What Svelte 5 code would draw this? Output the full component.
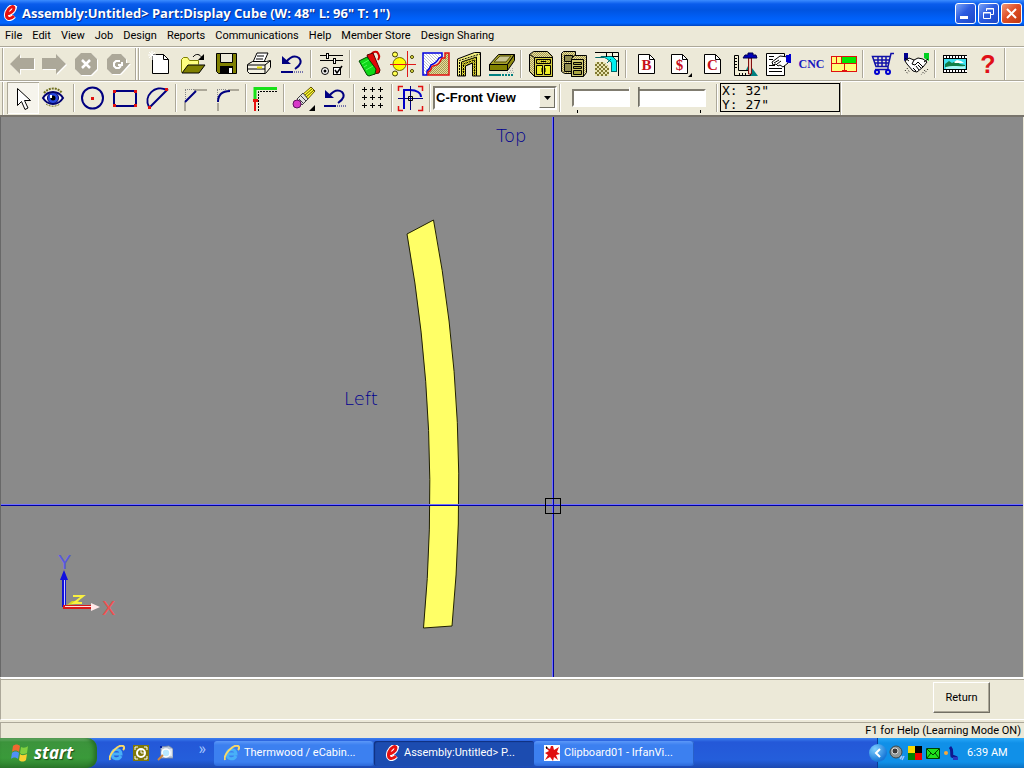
<script lang="ts">
	interface Tool {
		id: string;
		label: string;
	}

	const menus = [
		'File',
		'Edit',
		'View',
		'Job',
		'Design',
		'Reports',
		'Communications',
		'Help',
		'Member Store',
		'Design Sharing'
	];

	const navTools: Tool[] = [
		{ id: 'back', label: 'Back' },
		{ id: 'forward', label: 'Forward' },
		{ id: 'stop', label: 'Stop' },
		{ id: 'reload', label: 'Reload' }
	];

	// Each inner list is a run of buttons between two separators
	const mainTools: Tool[][] = [
		[
			{ id: 'new', label: 'New' },
			{ id: 'open', label: 'Open' },
			{ id: 'save', label: 'Save' },
			{ id: 'print', label: 'Print' },
			{ id: 'undo', label: 'Undo' }
		],
		[{ id: 'options', label: 'Settings' }],
		[
			{ id: 'materials', label: 'Materials' },
			{ id: 'hardware', label: 'Hardware' },
			{ id: 'profile', label: 'Profiles' },
			{ id: 'door', label: 'Doors' },
			{ id: 'drawer', label: 'Drawers' }
		],
		[
			{ id: 'cabinet', label: 'Cabinet' },
			{ id: 'cabinets', label: 'Cabinet library' },
			{ id: 'room', label: 'Room layout' }
		],
		[
			{ id: 'buy', label: 'Buy list' },
			{ id: 'cost', label: 'Cost' },
			{ id: 'cut', label: 'Cut list' },
			{ id: 'build', label: 'Construction' },
			{ id: 'notes', label: 'Work order' },
			{ id: 'cnc', label: 'CNC output' },
			{ id: 'nest', label: 'Nesting' }
		],
		[
			{ id: 'cart', label: 'Store' },
			{ id: 'share', label: 'Sharing' }
		],
		[
			{ id: 'film', label: 'Video' },
			{ id: 'help', label: 'Help' }
		]
	];

	const drawTools: Tool[][] = [
		[
			{ id: 'select', label: 'Select' },
			{ id: 'eye', label: 'View' }
		],
		[
			{ id: 'circle', label: 'Circle' },
			{ id: 'rect', label: 'Rectangle' },
			{ id: 'arc', label: 'Arc' }
		],
		[
			{ id: 'chamfer', label: 'Chamfer' },
			{ id: 'fillet', label: 'Fillet' }
		],
		[{ id: 'edge', label: 'Edge' }],
		[
			{ id: 'eraser', label: 'Erase' },
			{ id: 'undo', label: 'Undo sketch' }
		],
		[{ id: 'grid', label: 'Grid' }],
		[{ id: 'snap', label: 'Snap' }]
	];

	const views = ['C-Front View', 'C-Top View', 'C-Left View'];

	const tasks = [
		{ icon: 'ie', text: 'Thermwood / eCabin...' },
		{ icon: 'ecab', text: 'Assembly:Untitled> P...' },
		{ icon: 'irfan', text: 'Clipboard01 - IrfanVi...' }
	];

	let activeTool = $state('select');
	let activeTask = $state('ecab');
	let view = $state(views[0]);
	let zoom = $state(46);

	const grey = (d: string) =>
		`<g transform="translate(1 1)" fill="#fff">${d}</g><g fill="#aca899">${d}</g>`;

	const sheet = (letter: string) =>
		`<path d="M6.5 4.5h11l5 5v14h-16z" fill="#fff" stroke="#000"/><path d="M17.5 4.5v5h5" fill="none" stroke="#000"/>
		<text x="14.5" y="20" text-anchor="middle" font-family="Liberation Serif, serif" font-weight="bold" font-size="15" fill="#c8101c">${letter}</text>`;

	// All toolbar glyphs are drawn on a 28x28 grid
	const icons: Record<string, string> = {
		back: grey('<path d="M2 14L12 4v4h14v11H12v5z"/>'),
		forward: grey('<path d="M26 14L16 4v4H2v11h14v5z"/>'),
		stop:
			grey('<path d="M9 3h10l6 6v10l-6 6H9l-6-6V9z"/>') +
			'<path d="M10 10l8 8M18 10l-8 8" stroke="#fff" stroke-width="2.5"/>',
		reload:
			grey('<path d="M8 4h9l5 5v4h4l-7 8-3 3H8l-5-5V9z"/>') +
			'<path d="M16 11h-4l-2 2v3l2 2h3l2-2M14 15h4v-3" fill="none" stroke="#fff" stroke-width="2"/>',
		new: '<path d="M6.5 4.5h11l5 5v14h-16z" fill="#fff" stroke="#000"/><path d="M17.5 4.5v5h5" fill="none" stroke="#000"/><path d="M6 1v9M2 5h8M3 2l6 6M9 2L3 8" stroke="#fff"/>',
		open: '<path d="M2.5 22.5v-13l2-2h4l2 3h9v4" fill="#ffff80" stroke="#808000"/><path d="M3 23l6-8h17l-6 8z" fill="#808000" stroke="#000"/><path d="M14 7c3-4 7-3 9 1" fill="none" stroke="#000"/><path d="M25 4v6h-6z"/>',
		save: '<path d="M4.5 3.5h20v20h-18l-2-2z" fill="#808000" stroke="#000"/><path d="M8.5 3.5h12v9h-12z" fill="#ece9d8" stroke="#000"/><path d="M8 16h13v8H8z"/><path d="M17 18h3v5h-3z" fill="#fff"/>',
		print: '<path d="M8 12l4-9h11l-4 9z" fill="#fff" stroke="#000"/><path d="M12 6h7M11 9h7" stroke="#000"/><path d="M2.5 14.5l5-3h14l4-1v7l-5 6h-16l-2-2z" fill="#f4f2e4" stroke="#000"/><path d="M3 15h17l5-4M20 15v8M3 19h17" fill="none" stroke="#000"/><path d="M12 17.5h5" stroke="#e8e000" stroke-width="2"/>',
		undo: '<path d="M4 6v8h9z" fill="#000080"/><path d="M8 12c5-6 9-7 13-4 3 3 2 7-4 11" fill="none" stroke="#000080" stroke-width="2"/><path d="M3 22h12" stroke="#000080" stroke-width="2"/><path d="M16 22h9" stroke="#000080" stroke-dasharray="1 1"/>',
		options: '<g shape-rendering="crispEdges" fill="none" stroke="#000"><path d="M3 5.5h6M12 5.5h14M3 10.5h13M19 10.5h7"/><path d="M9.5 3v5h2V3zM16.5 8v5h2V8z" fill="#fff"/><path d="M16.5 17.5h7v7h-7z" fill="#fff"/></g><circle cx="8" cy="21" r="3.5" fill="#fff" stroke="#000"/><circle cx="8" cy="21" r="1.5"/><path d="M18 20l2 3 5-7" fill="none" stroke="#000" stroke-width="1.5"/>',
		materials: '<path d="M17 7c-3-3 0-6 4-5 2 2 3 5 1 8" fill="none" stroke="#d00000" stroke-width="2"/><path d="M11 5l6-2 7 17-1 3-5 1z" fill="#e00808" stroke="#500"/><path d="M3 11l8-4 9 12-1 5-6 2-2-1z" fill="#10d818" stroke="#004800"/><path d="M6 14l7-4M8 17l3-2M10 20l7-4" stroke="#50ff58"/>',
		hardware: '<circle cx="10.5" cy="14" r="6.5" fill="#ff0" stroke="#706800"/><g fill="#ffff50" stroke="#403c00"><circle cx="6" cy="4.5" r="2.5"/><circle cx="6" cy="23.5" r="2.5"/><circle cx="23" cy="7" r="1.5"/><circle cx="23" cy="21" r="1.5"/></g><path d="M1 14.5h26M18.5 1v26" stroke="#e01818"/>',
		profile: '<path d="M1 3h19v4l-3 1c-2 4-5 6-8 7-1 3-2 5-4 6v4H1z" fill="url(#hatch)" stroke="#0000e0" stroke-width="1.5"/><path d="M23 3h4v22H6v-3c5-1 2-6 5-6 6-1 7-4 9-8h3z" fill="url(#tan)" stroke="#e01010" stroke-width="1.5"/>',
		door: '<g stroke="#000"><path d="M2.5 26V9l17-6.5h6V26h-4V8l-15 6v12z" fill="#f4f080"/><path d="M6.5 26V12l15-5v19h-4V13l-7 3v10z" fill="url(#yellow)"/><path d="M10.5 26V16l7-3v13" fill="#ece9d8"/></g><path d="M4.5 26V10.5L25 4M8.5 26V14l11-4v16" fill="none" stroke="#000" stroke-dasharray="2 1"/>',
		drawer: '<path d="M1.5 14.5l9-10h16l-7 10z" fill="#a8a42c" stroke="#000"/><path d="M6 12l6-6h11l-5 6z" fill="#c8c490" stroke="#504c00"/><path d="M1.5 14.5h18v6h-18z" fill="#808000" stroke="#000"/><path d="M19.5 14.5l7-10v6l-7 10z" fill="#908c10" stroke="#000"/><path d="M19 22.5h7M22 20.5h4M24 18.5h2" stroke="#aaa" stroke-dasharray="1 1"/><path d="M1 25h12" stroke="#008080" stroke-width="2"/><path d="M14 25h12" stroke="#008080" stroke-width="2" stroke-dasharray="2 1"/>',
		cabinet: '<g stroke="#000"><path d="M2.5 4.5l4-3h14l5 5v20h-18l-5-5z" fill="url(#tan)"/><path d="M7.5 7.5h18v19h-18z" fill="#d8d040"/><path d="M2.5 4.5l5 3" fill="none"/><path d="M9.5 9.5h14v4h-14z" fill="url(#yellow)"/><path d="M9.5 15.5h6v9h-6zM17.5 15.5h6v9h-6z" fill="#f0f028"/></g><path d="M15 18v4M18 18v4M14 11.5h5" stroke="#000"/>',
		cabinets: '<g stroke="#000"><path d="M1.5 3.5l2-2h12v22h-11l-3-2z" fill="url(#tan)"/><path d="M4.5 5.5h8v6h-8zM4.5 13.5h8v8h-8z" fill="#908c50"/><path d="M11.5 8.5l3-3h12v17l-3 4h-12z" fill="url(#tan)"/><path d="M11.5 9.5h12v17h-12z" fill="#d0c870"/><path d="M13.5 12.5h8v2h-8zM13.5 16.5h8v2h-8zM13.5 20.5h8v4h-8z" fill="#a8a440"/></g>',
		room: '<path d="M2 2h24v24H2z" fill="#f4f0dc"/><path d="M2 12h9l5 5v9H2z" fill="url(#check)"/><path d="M2.5 7.5h9l2 1 5 4v9h5v-11l-4-4H8v1H2.5z" fill="#00f0f0" stroke="#006868"/><path d="M14 13l4-4M18 21.5h6" stroke="#006868"/><path d="M2 2.5h23.5V26M13.5 3v4M19.5 3v4M20 6.5h5M23.5 11h2" fill="none" stroke="#000"/>',
		buy: sheet('B'),
		cost: sheet('$') + '<path d="M27 23v4h-4z"/>',
		cut: sheet('C'),
		build: '<path d="M12 26l6-12 9 12z" fill="#008080"/><path d="M3.5 5.5h4v15h12v5h-16z" fill="#f4f0d8" stroke="#000"/><path d="M4 8.5h2M4 11.5h2M4 14.5h2M4 17.5h2M8.5 23v2M11.5 23v2M14.5 23v2" stroke="#000"/><path d="M17.5 8v16h3V8z" fill="#f0c8b8" stroke="#801010"/><path d="M12 8l2-3h3V3h5v2h3l1 3z" fill="#0000b8" stroke="#000050"/>',
		notes: '<path d="M2.5 3.5h18v22h-18z" fill="#fff" stroke="#000"/><path d="M5 6.5h5M5 9.5h4M5 18.5h13M5 21.5h13M5 15.5h6" stroke="#000"/><path d="M8 12l8-6 8 1v6l-5 4-3-2-2 1-2-2-3 1z" fill="#fff" stroke="#000"/><path d="M10 13l5-3M13 14l4-3" stroke="#000"/><path d="M22 5h3V4h2v9h-2l-3-1z" fill="#0000d0"/>',
		cnc: '<text x="14.5" y="18" text-anchor="middle" font-family="Liberation Serif, serif" font-weight="bold" font-size="12" fill="#1818c0">CNC</text>',
		nest: '<g shape-rendering="crispEdges"><path d="M1.5 6.5h25v15h-25z" fill="#ffff78" stroke="#e01010"/><path d="M12 7h14v6H12z" fill="#00e800"/><path d="M1 13.5h26M11.5 7v7M6.5 7v6M14.5 14v8" stroke="#e01010"/><path d="M12 20h5v2h-5z" fill="#e01010"/></g>',
		cart: '<path d="M25 3.5h-3l-3 13H7L3.5 6.5H21M5 10h15M6 13h14M9 6v10M13 6v10M17 6v10M19 16v3.5H6" fill="none" stroke="#1010a8" stroke-width="1.5"/><circle cx="8" cy="22" r="2" fill="#ece9d8" stroke="#0000d0" stroke-width="2"/><circle cx="19" cy="22" r="2" fill="#ece9d8" stroke="#0000d0" stroke-width="2"/>',
		share: '<path d="M2 3h4v6l-4 2z" fill="#000090"/><path d="M22 3h5v8l-5-3z" fill="#00d020"/><path d="M3 11l4-3 5 2 4-2 5 1 4 3-4 5-6 5-4-1-6-7z" fill="#fff" stroke="#000"/><path d="M12 10l-2 4 3 1 3-3 5 5M11 18l3 3M14 16l3 4M16 15l3 3M3 8l4 3M26 9l-4 3" fill="none" stroke="#000"/><path d="M3 20l3 4M5 18l3 5M26 19l-4 5M23 20l-4 5" stroke="#000" stroke-dasharray="1 2"/>',
		film: '<path d="M2 5h24v18H2z"/><path d="M3 9h22v10H3z" fill="#40e0f0"/><path d="M4 14l4-3 3 2 4-2 4 3 5 1v2H4z" fill="#108048"/><path d="M5 17c6-2 12 0 19-1v3H5z" fill="#a8f8f8"/><path d="M13 12l3-2 4 1 3 2h-9z" fill="#fff"/><path d="M3 7h23M3 21h23" stroke="#fff" stroke-width="2" stroke-dasharray="2 1"/>',
		help: '<text x="14" y="23" text-anchor="middle" font-family="Liberation Sans, sans-serif" font-weight="bold" font-size="25" fill="#e01018">?</text>',
		select: '<path d="M8.5 4.5v17l4-4 3.5 8 3-1.5-3.5-7.5h6z" fill="#fff" stroke="#000"/>',
		eye: '<path d="M2 14c5-8 15-8 20 0-5 8-15 8-20 0z" fill="#fff" stroke="#000070" stroke-width="2"/><path d="M3 9c5-6 14-6 18 0" fill="none" stroke="#707020" stroke-width="2" stroke-dasharray="2 1"/><circle cx="12" cy="14" r="5.5" fill="#2848e0" stroke="#000060"/><circle cx="12" cy="14" r="2.5"/><path d="M9 11h2v3H9z" fill="#fff"/><path d="M5 20c4 3 10 3 14 0" fill="none" stroke="#707020" stroke-dasharray="2 1"/>',
		circle: '<circle cx="13.5" cy="14" r="10.5" fill="none" stroke="#000080" stroke-width="2"/><path d="M12 13h3v3h-3z" fill="#e01010"/>',
		rect: '<path d="M3 7h22v15H3z" fill="none" stroke="#000080" stroke-width="2"/><path d="M2 6h3v3H2zM23 6h3v3h-3zM2 20h3v3H2zM23 20h3v3h-3z" fill="#e01010"/>',
		arc: '<path d="M6 23C0 12 12 0 24 6L6 24" fill="none" stroke="#000080" stroke-width="2"/><path d="M22 4h3v3h-3zM5 22h3v3H5z" fill="#e01010"/>',
		chamfer: '<path d="M13 6h13M4 18v9" stroke="#aca899" stroke-width="2"/><path d="M4 5.5h9M4.5 6v12" stroke="#888" stroke-dasharray="1 1"/><path d="M4 18L15 7" stroke="#000080" stroke-width="2"/>',
		fillet: '<path d="M15 6h11M5 19v8" stroke="#aca899" stroke-width="2"/><path d="M4 5.5h10M4.5 6v12" stroke="#888" stroke-dasharray="1 1"/><path d="M5 18c0-7 4-11 12-11" fill="none" stroke="#000080" stroke-width="2"/>',
		edge: '<path d="M4 15V4.5h22" fill="none" stroke="#18e018" stroke-width="3"/><path d="M4 15v12" stroke="#e81010" stroke-width="2"/><path d="M2 15h5v3H2z" fill="#e81010"/><path d="M7.5 27V7.5H26" fill="none" stroke="#000" stroke-dasharray="2 1"/>',
		eraser: '<path d="M13 11L22 3l4 4-9 10z" fill="#ffff30" stroke="#605000"/><path d="M15 12l9-8M16 14l9-8" stroke="#605000"/><path d="M8 15l6-6 5 6-6 6z" fill="#e0e0e0" stroke="#404040"/><path d="M10 15l5 5M12 12l5 5" stroke="#404040"/><circle cx="8" cy="20" r="4" fill="#d838c8" stroke="#601060"/><path d="M26 21v6h-6z"/>',
		grid: '<g stroke="#000" shape-rendering="crispEdges" stroke-dasharray="5 3"><path d="M3 5.5h23M3 13.5h23M3 21.5h23"/><path d="M5.5 3v23M13.5 3v23M21.5 3v23"/></g>',
		snap: '<path d="M1.5 7V2.5H6M21 2.5h4.5V7M25.5 22v4.5H21M6 26.5H1.5V22" fill="none" stroke="#e01010" stroke-width="1.5"/><path d="M7 25V6h6c7 0 11 3 11 7" fill="none" stroke="#0000c8" stroke-width="2"/><path d="M1 14.5h25M13.5 2v24" stroke="#000080"/><path d="M11.5 12.5h4v4h-4z" fill="none" stroke="#000"/>'
	};

	// Taskbar, tray and title glyphs use a 16x16 grid
	const small: Record<string, string> = {
		ecab: '<path d="M4 9c4 0 8-3 8-6 0-3-5-1-7 4-2 6 2 9 7 4" fill="none" stroke="#fff" stroke-width="5"/><path d="M11 1l3 1-1 3" fill="none" stroke="#fff" stroke-width="2"/><path d="M4 9c4 0 8-3 8-6 0-3-5-1-7 4-2 6 2 9 7 4" fill="none" stroke="#e81010" stroke-width="3"/>',
		ie: '<path d="M4 9h8c0-6-9-6-9 0 0 6 7 6 9 2" fill="none" stroke="#48b0f8" stroke-width="3"/><path d="M1 15C-1 10 9-1 14 1c2 1 1 3 0 4" fill="none" stroke="#f8d868" stroke-width="2"/>',
		outlook: '<path d="M0 0h16v16H0z" fill="#807808"/><path d="M2 5V2h3M11 2h3v3M14 11v3h-3M5 14H2v-3" fill="none" stroke="#fff"/><circle cx="8" cy="8" r="4" fill="#807808" stroke="#fff" stroke-width="2"/><path d="M8 5v3h3" fill="none" stroke="#fff"/>',
		finder: '<path d="M4 2l8-1 4 3v9H4z" fill="#e0e8f0" stroke="#7888a8"/><path d="M5 3h9M6 12h9" stroke="#98a8c0"/><circle cx="9" cy="8" r="4" fill="#b8e8ff" stroke="#fff" stroke-width="1.5"/><path d="M6 10l-5 5" stroke="#d08840" stroke-width="2"/><path d="M3 1h2v2H3z" fill="#0020a0"/>',
		irfan: '<path d="M0 0h16v16H0z" fill="#fff"/><path d="M7 1h2l1 4 5-3-2 5 3 2-4 1 2 5-4-3-1 4-3-4-5 3 3-5-3-2 4-2-4-4 5 2z" fill="#e01010"/><path d="M2 1l2 2-2 1z"/>',
		speaker: '<circle cx="7" cy="7" r="6" fill="#909898" stroke="#404848"/><circle cx="6" cy="6" r="3" fill="#383838" stroke="#d8d8d8"/><path d="M11 14l2-3M13 15l2-4" stroke="#a0c8ff" stroke-width="1.5"/>',
		squares: '<path d="M1 1h7v7H1z" fill="#f8d800"/><path d="M8 1h7v7H8z"/><path d="M1 8h7v7H1z" fill="#008000"/><path d="M8 8h7v7H8z" fill="#f00000"/>',
		mail: '<path d="M1.5 3.5h13v10h-13z" fill="#20e020" stroke="#004000"/><path d="M2 4l6 6 6-6M2 13l4-5M14 13l-4-5" fill="none" stroke="#004000"/>',
		phone: '<path d="M7 2c3 3 1 6 2 9l5 2" fill="none" stroke="#101890" stroke-width="3"/><circle cx="3" cy="8" r="2" fill="#f8a838"/><path d="M10 12h5v3h-5z" fill="#2838c0"/>'
	};
</script>

{#snippet glyph(id: string)}
	<svg class="glyph" viewBox="0 0 28 28" aria-hidden="true">{@html icons[id]}</svg>
{/snippet}

{#snippet mini(id: string)}
	<svg class="mini" viewBox="0 0 16 16" aria-hidden="true">{@html small[id]}</svg>
{/snippet}

<svg class="defs" aria-hidden="true">
	<defs>
		<pattern id="yellow" width="2" height="2" patternUnits="userSpaceOnUse">
			<path d="M0 0h2v2H0z" fill="#e8e040" /><path d="M0 0h1v1H0zM1 1h1v1H1z" fill="#a8a020" />
		</pattern>
		<pattern id="tan" width="2" height="2" patternUnits="userSpaceOnUse">
			<path d="M0 0h2v2H0z" fill="#e4dca0" /><path d="M0 0h1v1H0zM1 1h1v1H1z" fill="#a89c50" />
		</pattern>
		<pattern id="hatch" width="3" height="3" patternUnits="userSpaceOnUse">
			<path d="M0 0h3v3H0z" fill="#fff" /><path d="M0 0l3 3" stroke="#c0c4d0" />
		</pattern>
		<pattern id="check" width="4" height="4" patternUnits="userSpaceOnUse">
			<path d="M0 0h4v4H0z" fill="#e8e4b0" /><path d="M0 0h2v2H0zM2 2h2v2H2z" fill="#807830" />
		</pattern>
	</defs>
</svg>

<div class="window">
	<header class="titlebar">
		{@render mini('ecab')}
		<h1>Assembly:Untitled&gt; Part:Display Cube (W: 48" L: 96" T: 1")</h1>
		<button class="caption" aria-label="Minimize">
			<svg viewBox="0 0 19 19"><path d="M4 12h8v3H4z" fill="#fff" /></svg>
		</button>
		<button class="caption" aria-label="Restore">
			<svg viewBox="0 0 19 19" fill="none" stroke="#fff">
				<path d="M7.5 7V4.5h7v6H12M7 5h8M4.5 8.5h7v6h-7zM4 9h8" />
			</svg>
		</button>
		<button class="caption close" aria-label="Close">
			<svg viewBox="0 0 19 19"><path d="M5 5l9 9M14 5l-9 9" stroke="#fff" stroke-width="2" /></svg>
		</button>
	</header>

	<nav class="menubar">
		{#each menus as menu}
			<button>{menu}</button>
		{/each}
	</nav>

	<div class="toolrow">
		<div class="band nav">
			{#each navTools as tool}
				<button class="tool" aria-label={tool.label} disabled>{@render glyph(tool.id)}</button>
			{/each}
		</div>
		<div class="band main">
			{#each mainTools as group, i}
				{#if i > 0}<span class="sep"></span>{/if}
				{#each group as tool}
					<button class="tool" aria-label={tool.label}>{@render glyph(tool.id)}</button>
				{/each}
			{/each}
		</div>
	</div>

	<div class="toolrow second">
		<div class="band draw">
			{#each drawTools as group, i}
				{#if i > 0}<span class="sep"></span>{/if}
				{#each group as tool}
					<button
						class="tool"
						class:pressed={activeTool === tool.id}
						aria-label={tool.label}
						onclick={() => (activeTool = tool.id)}
					>
						{@render glyph(tool.id)}
					</button>
				{/each}
			{/each}
			<span class="sep"></span>
			<div class="combo">
				<select aria-label="View" bind:value={view}>
					{#each views as name}
						<option>{name}</option>
					{/each}
				</select>
				<span class="drop"><svg viewBox="0 0 7 4"><path d="M0 0h7L3.5 4z" /></svg></span>
			</div>
			<span class="sep"></span>
			<div class="slider">
				<input type="range" aria-label="Zoom" min="0" max="100" bind:value={zoom} />
				<div class="ticks"><i></i><i></i></div>
			</div>
			<span class="sep"></span>
			<div class="readout">
				<div>X: 32"</div>
				<div>Y: 27"</div>
			</div>
		</div>
	</div>

	<main class="canvas">
		<svg width="100%" height="100%">
			<path
				d="M406 117L432.5 103A1430 1430 0 0 1 451 509L422.5 511A1470 1470 0 0 0 406 117z"
				fill="#ffff66"
				stroke="#202000"
			/>
			<g shape-rendering="crispEdges">
				<path d="M551.5 0v2000M0 387.5h4000" stroke="#7070ff" />
				<path d="M552.5 0v2000M0 388.5h4000" stroke="#0000a0" />
				<path d="M544.5 381.5h15v15h-15z" fill="none" stroke="#000" />
			</g>
			<g class="label" fill="#000090">
				<text x="495" y="25">Top</text>
				<text x="343" y="288">Left</text>
			</g>
			<path d="M63 490V460" stroke="#1010d8" stroke-width="4" />
			<path d="M63.5 490V462" stroke="#c8c8ff" />
			<path d="M63 453l4 10h-8z" fill="#1010e0" />
			<path d="M62 490h29" stroke="#d81818" stroke-width="4" />
			<path d="M64 489.5h28" stroke="#ffe0e0" />
			<path d="M90 486l9 4-9 4z" fill="#ffe8e8" />
			<path d="M66 488l5-4h7l-3 3z" fill="#d8d820" />
			<g class="axis">
				<text x="57" y="452" fill="#5858e0">Y</text>
				<text x="101" y="498" fill="#f05050">X</text>
			</g>
			<path d="M72 479h10l-9 7h8" fill="none" stroke="#f8f040" stroke-width="2" />
		</svg>
	</main>

	<section class="panel">
		<button class="return">Return</button>
	</section>

	<footer class="status">F1 for Help (Learning Mode ON)</footer>

	<div class="taskbar">
		<button class="start">
			<svg viewBox="0 0 20 20" aria-hidden="true">
				<path d="M3 3c2-2 5-2 7 0L9 9c-2-2-5-2-7 0z" fill="#f06830" />
				<path d="M11 4c2 1 5 1 7-1l-1 7c-2 1-5 2-7 0z" fill="#80d040" />
				<path d="M2 10c2-2 5-2 7 0l-1 6c-2-2-5-2-7 0z" fill="#5090f8" />
				<path d="M10 11c2 2 5 1 7 0l-1 6c-2 2-5 2-7 0z" fill="#f8d030" />
			</svg>
			start
		</button>
		<div class="quick">
			<button aria-label="Internet Explorer">{@render mini('ie')}</button>
			<button aria-label="Outlook">{@render mini('outlook')}</button>
			<button aria-label="Finder">{@render mini('finder')}</button>
			<button class="more" aria-label="More">»</button>
		</div>
		<div class="tasks">
			{#each tasks as task}
				<button
					class="task"
					class:active={activeTask === task.icon}
					onclick={() => (activeTask = task.icon)}
				>
					{@render mini(task.icon)}
					<span>{task.text}</span>
				</button>
			{/each}
		</div>
		<div class="tray">
			<button class="chevron" aria-label="Show hidden icons">
				<svg viewBox="0 0 18 18"><path d="M11 5L7 9l4 4" fill="none" stroke="#fff" stroke-width="2" /></svg>
			</button>
			{@render mini('speaker')}
			{@render mini('squares')}
			{@render mini('mail')}
			{@render mini('phone')}
			<time>6:39 AM</time>
		</div>
	</div>
</div>

<style>
	:global(body) {
		margin: 0;
		background: #ece9d8;
	}

	.window {
		--ui: Roboto, sans-serif;
		--face: #ece9d8;
		--shade: #aca899;
		display: flex;
		flex-direction: column;
		min-height: 100vh;
		background: var(--face);
		font: 11px/14px var(--ui);
		color: #000;
	}

	button {
		font: inherit;
		color: inherit;
		margin: 0;
		padding: 0;
		border: 0;
		background: none;
	}

	.defs {
		position: absolute;
		width: 0;
		height: 0;
	}

	.glyph {
		display: block;
		width: 28px;
		height: 28px;
	}

	.mini {
		display: block;
		flex: none;
		width: 16px;
		height: 16px;
	}

	.titlebar {
		display: flex;
		align-items: center;
		gap: 2px;
		height: 26px;
		padding: 0 2px;
		background: linear-gradient(#3c8cff 0, #0a5cec 4px, #0054e0 10px, #0060f8 18px, #0066ff 23px, #0044c0 26px);
	}

	h1 {
		flex: 1;
		margin: 0 0 0 2px;
		font: bold 13px/18px 'Open Sans', sans-serif;
		color: #fff;
		text-shadow: 1px 1px #0a2c8c;
		white-space: nowrap;
	}

	.caption {
		width: 21px;
		height: 21px;
		box-sizing: border-box;
		border: 1px solid #fff;
		border-radius: 3px;
		background: linear-gradient(135deg, #7aa4f8, #2c5ce0 45%, #1c48c8);
	}

	.caption svg {
		display: block;
		width: 19px;
		height: 19px;
	}

	.close {
		background: linear-gradient(135deg, #f09878, #e05028 45%, #c03810);
	}

	.menubar {
		display: flex;
		gap: 10px;
		padding: 3px 5px;
		border-bottom: 1px solid var(--shade);
	}

	.toolrow {
		display: flex;
		gap: 3px;
		padding-left: 3px;
		border-top: 1px solid #fff;
		border-bottom: 1px solid var(--shade);
		height: 32px;
	}

	.band {
		display: flex;
		align-items: center;
		border-left: 1px solid #fff;
		border-right: 1px solid var(--shade);
		box-shadow: -1px 0 var(--shade), 1px 0 #fff;
	}

	.nav {
		padding: 0 1px 0 2px;
	}

	.main {
		padding-left: 3px;
	}

	.tool {
		padding: 0 2px;
		height: 32px;
	}

	.main .tool {
		padding-left: 3px;
	}

	.pressed {
		background: #f6f4ec;
		box-shadow: inset 1px 1px var(--shade), inset -1px -1px #fff;
	}

	.sep {
		width: 2px;
		height: 28px;
		margin: 0 2px;
		box-sizing: border-box;
		border-left: 1px solid var(--shade);
		border-right: 1px solid #fff;
	}

	.second {
		height: 33px;
		border-bottom: 2px solid #78746c;
	}

	.draw {
		padding: 0 0 2px 3px;
	}

	.combo {
		position: relative;
		width: 124px;
		height: 24px;
	}

	select {
		appearance: none;
		width: 100%;
		height: 100%;
		padding: 0 22px 1px 1px;
		border: 2px solid;
		border-color: #807c70 #fff #fff #807c70;
		border-radius: 0;
		background: #fff;
		font: bold 13px 'Liberation Sans', sans-serif;
		color: #000;
	}

	.drop {
		position: absolute;
		top: 2px;
		right: 2px;
		width: 16px;
		height: 20px;
		box-sizing: border-box;
		display: grid;
		place-items: center;
		border: 1px solid;
		border-color: #fff #716f64 #716f64 #fff;
		background: var(--face);
		pointer-events: none;
	}

	.drop svg {
		width: 7px;
		height: 4px;
	}

	.slider {
		display: flex;
		flex-direction: column;
		align-self: flex-end;
		width: 134px;
		margin: 0 8px 0 9px;
	}

	input {
		appearance: none;
		width: 100%;
		height: 25px;
		margin: 0;
		background: none;
	}

	input::-webkit-slider-runnable-track {
		height: 18px;
		box-sizing: border-box;
		border: 2px solid;
		border-color: #807c70 #fff #fff #807c70;
		background: #fff;
	}

	input::-webkit-slider-thumb {
		appearance: none;
		width: 11px;
		height: 24px;
		margin-top: -4px;
		background: linear-gradient(90deg, #fff 1px, #ece9d8 1px, #ece9d8 9px, #716f64 9px);
		clip-path: polygon(0 0, 100% 0, 100% 80%, 50% 100%, 0 80%);
	}

	.ticks {
		display: flex;
		justify-content: space-between;
		padding: 0 5px;
	}

	.ticks i {
		width: 1px;
		height: 3px;
		background: #000;
	}

	.readout {
		width: 120px;
		height: 29px;
		box-sizing: border-box;
		border: 1px solid #000;
		padding-left: 1px;
		font: 13px/14px 'DejaVu Sans Mono', monospace;
	}

	.canvas {
		flex: 1;
		min-height: 540px;
		margin-right: 1px;
		border-left: 1px solid #686868;
		background: #8a8a8a;
		position: relative;
	}

	.canvas svg {
		position: absolute;
		inset: 0;
	}

	.label {
		font: 200 18px 'DejaVu Sans', sans-serif;
	}

	.axis {
		font: 20px 'Liberation Sans', sans-serif;
	}

	.panel {
		display: flex;
		justify-content: flex-end;
		padding: 3px 34px 6px;
		border-top: 2px solid #fff;
		border-bottom: 1px solid #fff;
		border-left: 1px solid var(--shade);
		box-shadow: inset 0 1px var(--shade);
	}

	.return {
		width: 57px;
		height: 31px;
		border: 1px solid;
		border-color: #fff #716f64 #716f64 #fff;
		box-shadow: inset -1px -1px var(--shade);
	}

	.status {
		margin-top: 2px;
		padding: 1px 3px 0;
		border-top: 1px solid var(--shade);
		border-left: 1px solid var(--shade);
		text-align: right;
	}

	.taskbar {
		display: flex;
		height: 30px;
		background: linear-gradient(#3c80f0, #2458d8 4px, #245edb 22px, #1c48b0);
		color: #fff;
	}

	.start {
		display: flex;
		align-items: center;
		gap: 4px;
		width: 97px;
		padding-left: 10px;
		border-radius: 0 10px 10px 0;
		background: linear-gradient(#7cc07c, #3c943c 4px, #3a9a3a 20px, #2c7c2c);
		box-shadow: inset -3px 0 4px #246c24;
		font: italic bold 17px/24px 'Open Sans', sans-serif;
		text-shadow: 1px 1px 1px #184818;
	}

	.start svg {
		flex: none;
		width: 20px;
		height: 20px;
	}

	.quick {
		display: flex;
		align-items: center;
		gap: 8px;
		width: 105px;
		padding-left: 12px;
	}

	.more {
		margin: 0 0 8px auto;
		padding-right: 8px;
		font-size: 16px;
		color: #a8c8ff;
	}

	.tasks {
		display: flex;
		flex: 1;
		align-items: center;
		min-width: 0;
	}

	.task {
		display: flex;
		flex: 0 1 160px;
		align-items: center;
		gap: 4px;
		height: 25px;
		min-width: 0;
		box-sizing: border-box;
		padding: 0 10px;
		border-radius: 3px;
		background: linear-gradient(#5c98f8, #3c80f0 4px, #3c80f0 21px, #2c68d8);
		box-shadow: inset -1px 0 #2860c8;
		white-space: nowrap;
	}

	.active {
		background: #1c4cb0;
		box-shadow: inset 1px 1px 1px #103080;
	}

	.tray {
		display: flex;
		flex: none;
		align-items: center;
		gap: 2px;
		width: 147px;
		box-sizing: border-box;
		border-left: 1px solid #0c3c98;
		background: linear-gradient(#28a8f8, #1090e8 5px, #1090e8 24px, #0c70c0);
	}

	.chevron {
		width: 18px;
		height: 18px;
		margin-left: -9px;
		border-radius: 50%;
		background: radial-gradient(circle at 6px 5px, #80d0ff, #1878d8 70%);
	}

	.chevron svg {
		display: block;
	}

	time {
		margin-left: 6px;
	}
</style>
